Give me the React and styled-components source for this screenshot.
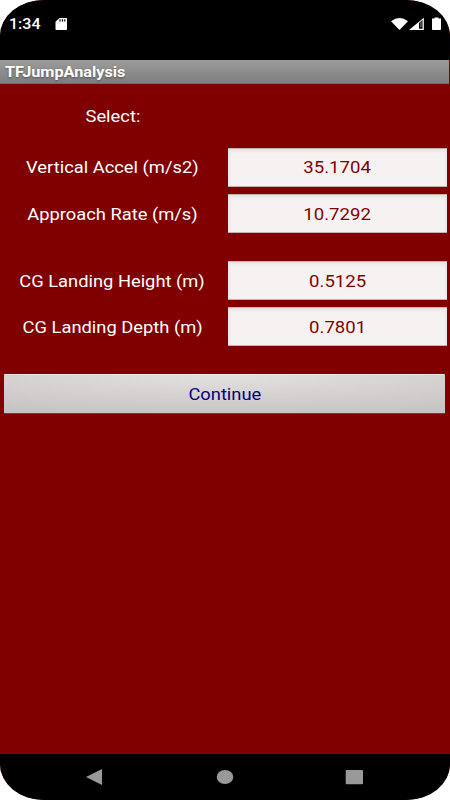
import React from 'react';
import styled, { createGlobalStyle } from 'styled-components';

const GlobalStyle = createGlobalStyle`
  body {
    margin: 0;
    background: #fff;
  }
`;

const StyledScreen = styled.div`
  display: flex;
  flex-direction: column;
  width: 450px;
  height: 800px;
  overflow: hidden;
  border-radius: 44px / 36px;
  background: #800000;
  font-family: Roboto, 'Liberation Sans', sans-serif;
`;

const StyledStatusBar = styled.div`
  display: flex;
  flex: none;
  align-items: center;
  box-sizing: border-box;
  height: 60px;
  padding: 0 8px 12px 9px;
  background: #000;
`;

const StyledStatusIcons = styled.svg`
  display: block;
  margin-left: auto;
`;

const StyledCardIcon = styled.svg`
  display: block;
  margin-left: 14px;
`;

const StyledText = styled.span`
  display: inline-block;
  white-space: nowrap;
  transform: scaleX(${({ $stretch }) => $stretch || 1.145});
  transform-origin: ${({ $origin }) => $origin || 'center'};
`;

const StyledClock = styled.div`
  width: 32px;
  color: #fff;
  font-size: 14px;
  font-weight: 500;
  line-height: 18px;
`;

const StyledTitleBar = styled.div`
  flex: none;
  box-sizing: border-box;
  height: 24px;
  margin-right: 1px;
  padding-left: 5px;
  border-bottom: 1px solid #776c6c;
  background: linear-gradient(#9c9c9c, #7e7e7e);
  color: #fff;
  font-size: 14px;
  font-weight: 700;
  line-height: 24px;
  text-shadow: 0 1px 2px rgba(0, 0, 0, 0.4);
`;

const StyledContent = styled.div`
  flex: 1;
`;

const StyledHeading = styled.div`
  width: 225px;
  height: 64px;
  color: #fff;
  font-size: 16px;
  line-height: 66px;
  text-align: center;
`;

const StyledGroup = styled.div`
  display: grid;
  row-gap: 7px;
  margin-bottom: 28px;
`;

const StyledRow = styled.div`
  display: grid;
  grid-template-columns: 225px 219px;
  column-gap: 3px;
  height: 39px;
  font-size: 16px;
  line-height: ${({ $line }) => $line || 41}px;
  text-align: center;
`;

const StyledLabel = styled.div`
  color: #fff;
`;

const StyledField = styled.div`
  height: 39px;
  background: #f7f2f2;
  box-shadow: inset 0 1px #c4b4b4, inset 0 -1px #c9b1b1, inset 0 2px 4px rgba(60, 30, 30, 0.12);
  color: #800000;
`;

const StyledButton = styled.button`
  display: block;
  box-sizing: border-box;
  width: 441px;
  height: 40px;
  margin: 0 0 0 4px;
  padding: 0;
  border: solid;
  border-width: 1px 0;
  border-color: #f2eaea #6b4040 #6b4040;
  border-radius: 1px;
  background: radial-gradient(ellipse 420px 40px at 50% 0, #e5e0e0, #c9c4c4);
  color: #000080;
  font-family: inherit;
  font-size: 16px;
  line-height: 40px;
  text-align: center;
`;

const StyledNavBar = styled.div`
  flex: none;
  height: 46px;
  background: #000;
`;

const groups = [
  [
    { label: 'Vertical Accel (m/s2)', value: '35.1704', line: 39 },
    { label: 'Approach Rate (m/s)', value: '10.7292' },
  ],
  [
    { label: 'CG Landing Height (m)', value: '0.5125' },
    { label: 'CG Landing Depth (m)', value: '0.7801' },
  ],
];

const StatusBar = () => (
  <StyledStatusBar>
    <StyledClock>
      <StyledText $origin="left">1:34</StyledText>
    </StyledClock>
    <StyledCardIcon width="13" height="14" viewBox="0 0 13 14">
      <path d="M4.5 1H11.2Q12 1 12 1.8V12.2Q12 13 11.2 13H1.3Q.5 13 .5 12.2V4.8Z" fill="#fff" />
      <path d="M5 2.2V4.5M7.4 2.2V4.5M9.8 2.2V4.5" stroke="#000" strokeWidth="1.2" />
    </StyledCardIcon>
    <StyledStatusIcons width="51" height="14" viewBox="0 0 51 14">
      <path d="M0 4.2Q8.5-2.2 17 4.2L8.5 13Z" fill="#fff" />
      <path d="M18 13L32.8.8V13Z" fill="#fff" />
      <path d="M28 6L31.5 3V11.8H28Z" fill="#000" />
      <path d="M30 4.8V10.2" stroke="#999" strokeWidth="1" />
      <path d="M43.5.5H47.5V1.5H50V12.2Q50 13 49.2 13H41.8Q41 13 41 12.2V1.5H43.5Z" fill="#fff" />
    </StyledStatusIcons>
  </StyledStatusBar>
);

const NavBar = () => (
  <StyledNavBar>
    <svg width="450" height="46" viewBox="0 0 450 46" fill="#999">
      <path d="M86 23L102 15V31Z" />
      <ellipse cx="225" cy="23" rx="8.3" ry="7" />
      <rect x="345.7" y="16" width="17.3" height="14.3" rx="1" />
    </svg>
  </StyledNavBar>
);

const App = () => (
  <>
    <GlobalStyle />
    <StyledScreen>
      <StatusBar />
      <StyledTitleBar>
        <StyledText $origin="left" $stretch={1.16}>TFJumpAnalysis</StyledText>
      </StyledTitleBar>
      <StyledContent>
        <StyledHeading>
          <StyledText>Select:</StyledText>
        </StyledHeading>
        {groups.map((rows) => (
          <StyledGroup key={rows[0].label}>
            {rows.map(({ label, value, line }) => (
              <StyledRow key={label} $line={line}>
                <StyledLabel>
                  <StyledText>{label}</StyledText>
                </StyledLabel>
                <StyledField>
                  <StyledText $stretch={1.16}>{value}</StyledText>
                </StyledField>
              </StyledRow>
            ))}
          </StyledGroup>
        ))}
        <StyledButton type="button">
          <StyledText>Continue</StyledText>
        </StyledButton>
      </StyledContent>
      <NavBar />
    </StyledScreen>
  </>
);

export default App;
